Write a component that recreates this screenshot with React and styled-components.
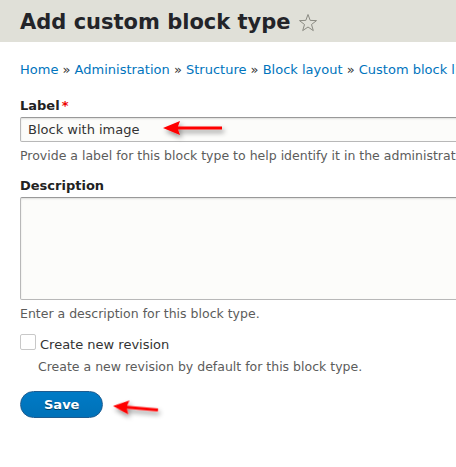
import styled, { createGlobalStyle } from 'styled-components';

const GlobalStyle = createGlobalStyle`
  html, body {
    margin: 0;
    padding: 0;
    background: #fff;
    overflow: hidden;
  }
  body {
    font-family: 'DejaVu Sans', Verdana, sans-serif;
    color: #222;
  }
`

const Page = styled.div`
  position: relative;
  width: 456px;
  height: 467px;
  overflow: hidden;
`

const Header = styled.header`
  height: 42px;
  background: #e0e0d8;
  padding: 2px 0 0 20px;
  box-sizing: border-box;
  display: flex;
  align-items: flex-start;
`

const Title = styled.h1`
  margin: 0;
  font-size: 21px;
  line-height: 40px;
  font-weight: 700;
  color: #232429;
  white-space: nowrap;
`

const Star = styled.svg`
  width: 20px;
  height: 20px;
  margin: 11px 0 0 7px;
  flex-shrink: 0;
`

const Content = styled.main`
  width: 700px;
  padding: 0 20px;
`

const Breadcrumb = styled.nav`
  margin-top: 18.5px;
  font-size: 13px;
  line-height: 18px;
  white-space: pre;
  color: #333;

  a {
    color: #0074bd;
    text-decoration: none;
  }
`

const FormItem = styled.div`
  margin-top: ${(props) => props.gap || 0}px;
`

const Label = styled.label`
  display: block;
  font-size: 13px;
  line-height: 18px;
  font-weight: 700;
  margin-bottom: 2.5px;
  color: #222;

  em {
    font-style: normal;
    color: #e00;
    margin-left: 2px;
  }
`

const TextInput = styled.input`
  display: block;
  box-sizing: border-box;
  width: 100%;
  height: 25px;
  padding: 0 7px;
  font-family: inherit;
  font-size: 13px;
  color: #333;
  background: #fcfcfa;
  border: 1px solid #b8b8b8;
  border-top-color: #999;
  border-radius: 2px;
  box-shadow: inset 0 1px 2px rgba(0, 0, 0, 0.125);
  outline: none;
`

const TextArea = styled.textarea`
  display: block;
  box-sizing: border-box;
  width: 100%;
  height: 103px;
  resize: none;
  font-family: inherit;
  background: #fcfcfa;
  border: 1px solid #b8b8b8;
  border-top-color: #999;
  border-radius: 2px;
  box-shadow: inset 0 1px 2px rgba(0, 0, 0, 0.125);
  outline: none;
`

const Help = styled.div`
  margin-top: ${(props) => props.gap || 4.5}px;
  padding-left: ${(props) => props.indent || 0}px;
  font-size: 12.5px;
  line-height: 18px;
  color: #5c5c5b;
  white-space: nowrap;
`

const CheckRow = styled.div`
  display: flex;
  align-items: flex-start;
  gap: 4px;
`

const Box = styled.span`
  display: block;
  width: 16px;
  height: 16px;
  box-sizing: border-box;
  margin-top: -2px;
  border: 1px solid #c8c8c8;
  border-radius: 2px;
  background: #fff;
`

const CheckLabel = styled.span`
  font-size: 13px;
  line-height: 18px;
  color: #333;
`

const Actions = styled.div`
  margin-top: 14.5px;
`

const SaveButton = styled.button`
  height: 27px;
  padding: 0 23px;
  font-family: inherit;
  font-size: 13px;
  font-weight: 700;
  color: #fff;
  background: linear-gradient(to bottom, #007bc6, #0071b8);
  border: 1px solid #1e5c90;
  border-radius: 20em;
  text-shadow: 0 1px rgba(0, 0, 0, 0.5);
  cursor: pointer;
`

const Arrow = styled.svg`
  position: absolute;
  left: ${(props) => props.x}px;
  top: ${(props) => props.y}px;
  overflow: visible;
  pointer-events: none;
`

const ArrowShape = ({ tipX, tipY, baseX, endX, endY, id }) => {
  const dx = endX - tipX
  const dy = endY - tipY
  const len = Math.sqrt(dx * dx + dy * dy)
  const angle = (Math.atan2(dy, dx) * 180) / Math.PI
  const head = baseX
  return (
    <g transform={`translate(${tipX} ${tipY}) rotate(${angle})`} filter={`url(#${id})`}>
      <polygon points={`0,0 ${head},-7 ${head - 2},-1.5 ${len},-1.5 ${len},1.5 ${head - 2},1.5 ${head},7`} fill="#f00" />
    </g>
  )
}

const ShadowDef = ({ id }) => (
  <defs>
    <filter id={id} x="-50%" y="-100%" width="200%" height="300%">
      <feDropShadow dx="2" dy="3" stdDeviation="2.5" floodColor="#000" floodOpacity="0.45" />
    </filter>
  </defs>
)

const crumbs = ['Home', 'Administration', 'Structure', 'Block layout', 'Custom block library']

const App = () => {
  return (
    <Page>
      <GlobalStyle />
      <Header>
        <Title>Add custom block type</Title>
        <Star viewBox="0 0 20 20">
          <polygon
            points="10,1.5 12.2,7.4 18.5,7.6 13.5,11.5 15.3,17.6 10,14 4.7,17.6 6.5,11.5 1.5,7.6 7.8,7.4"
            fill="none"
            stroke="#8a8a82"
            strokeWidth="1"
            strokeLinejoin="round"
          />
        </Star>
      </Header>

      <Content>
        <Breadcrumb>
          {crumbs.map((c, i) => (
            <span key={c}>
              {i > 0 && ' » '}
              <a href="#">{c}</a>
            </span>
          ))}
        </Breadcrumb>

        <FormItem gap={18}>
          <Label>Label<em>*</em></Label>
          <TextInput defaultValue="Block with image" />
          <Help>Provide a label for this block type to help identify it in the administration pages.</Help>
        </FormItem>

        <FormItem gap={12}>
          <Label>Description</Label>
          <TextArea />
          <Help>Enter a description for this block type.</Help>
        </FormItem>

        <FormItem gap={13.5}>
          <CheckRow>
            <Box />
            <CheckLabel>Create new revision</CheckLabel>
          </CheckRow>
          <Help gap={4} indent={18}>Create a new revision by default for this block type.</Help>
        </FormItem>

        <Actions>
          <SaveButton>Save</SaveButton>
        </Actions>
      </Content>

      <Arrow x={0} y={0} width="456" height="467">
        <ShadowDef id="arrowShadow" />
        <ArrowShape id="arrowShadow" tipX={163} tipY={128} baseX={17} endX={222} endY={128} />
        <ArrowShape id="arrowShadow" tipX={113} tipY={406} baseX={16} endX={158} endY={410} />
      </Arrow>
    </Page>
  )
}

export default App
